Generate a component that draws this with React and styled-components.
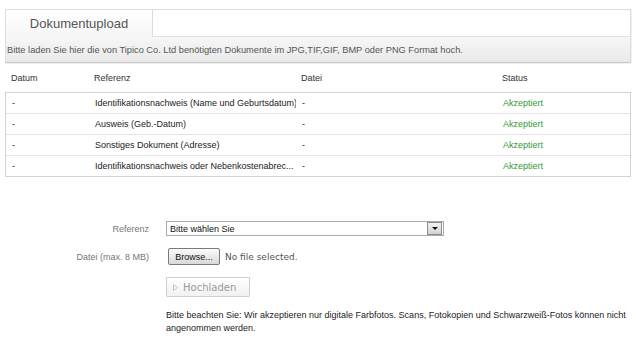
import styled, { createGlobalStyle } from "styled-components";

const GlobalStyle = createGlobalStyle`
  body {
    margin: 0;
    background: #fff;
    font-family: "Liberation Sans", Arial, sans-serif;
  }
`;

const Page = styled.div`
  width: 626px;
  padding: 9px 5px 0 5px;
`;

const Panel = styled.div`
  border: 1px solid #dcdcdc;
  border-bottom-color: #c9c9c9;
  box-shadow: 1px 1px 1px rgba(0, 0, 0, 0.06);
`;

const TabRow = styled.div`
  display: flex;
  height: 27px;
`;

const Tab = styled.div`
  width: 146px;
  border-right: 1px solid #dcdcdc;
  background: linear-gradient(#ffffff, #f6f6f6);
  display: flex;
  align-items: center;
  justify-content: center;
  font-size: 13px;
  color: #555;
`;

const TabFill = styled.div`
  flex: 1;
  border-bottom: 1px solid #e2e2e2;
  background: #fff;
`;

const InfoBar = styled.div`
  height: 25px;
  display: flex;
  align-items: center;
  padding-left: 1px;
  font-size: 9.25px;
  color: #555;
  background: linear-gradient(#f7f7f7, #e9e9e9);
`;

const columns = "83px 207px 201px 1fr";

const HeadRow = styled.div`
  display: grid;
  grid-template-columns: ${columns};
  height: 29px;
  align-items: center;
  font-size: 9px;
  color: #333;
`;

const Body = styled.div`
  border: 1px solid #d4d4d4;
`;

const Row = styled.div`
  display: grid;
  grid-template-columns: ${columns};
  height: 20px;
  align-items: center;
  font-size: 9px;
  color: #222;
  & + & {
    border-top: 1px solid #e3e3e3;
  }
`;

const Cell = styled.div`
  padding-left: 6px;
  white-space: nowrap;
  overflow: hidden;
  color: ${(p) => (p.$ok ? "#349a34" : "inherit")};
`;

const Form = styled.div`
  display: grid;
  grid-template-columns: 144px 1fr;
  column-gap: 17px;
  row-gap: 12px;
  margin-top: 44px;
  align-items: center;
`;

const Label = styled.div`
  text-align: right;
  font-size: 9px;
  color: #777;
`;

const Select = styled.div`
  width: 273px;
  height: 13px;
  border: 1px solid #a9a9a9;
  display: flex;
  align-items: center;
  justify-content: space-between;
  font-size: 9px;
  color: #111;
  padding-left: 3px;
`;

const Arrow = styled.div`
  width: 13px;
  height: 11px;
  margin-right: 1px;
  border: 1px solid #8c8c8c;
  background: linear-gradient(#f2f2f2, #d2d2d2);
  display: flex;
  align-items: center;
  justify-content: center;
  &::after {
    content: "";
    border-left: 3px solid transparent;
    border-right: 3px solid transparent;
    border-top: 3px solid #111;
  }
`;

const FileRow = styled.div`
  display: flex;
  align-items: center;
  gap: 5px;
  padding-left: 2px;
`;

const BrowseButton = styled.button`
  height: 17px;
  width: 52px;
  padding: 0;
  border: 1px solid #7a7a7a;
  border-radius: 2px;
  background: linear-gradient(#fbfbfb, #d9d9d9);
  font-family: "Liberation Sans", Arial, sans-serif;
  font-size: 9px;
  color: #111;
`;

const NoFile = styled.span`
  font-family: "DejaVu Sans", sans-serif;
  font-size: 9px;
  color: #555;
`;

const UploadButton = styled.button`
  width: 84px;
  height: 20px;
  padding: 0 0 0 6px;
  display: flex;
  align-items: center;
  gap: 5px;
  border: 1px solid #cfcfcf;
  border-radius: 1px;
  background: linear-gradient(#ffffff, #f1f1f1);
  font-family: "DejaVu Sans", sans-serif;
  font-size: 10px;
  color: #9a9a9a;
`;

const Note = styled.p`
  grid-column: 2;
  margin: 0;
  font-size: 9px;
  line-height: 13px;
  color: #222;
  padding-right: 4px;
`;

const rows = [
  "Identifikationsnachweis (Name und Geburtsdatum)",
  "Ausweis (Geb.-Datum)",
  "Sonstiges Dokument (Adresse)",
  "Identifikationsnachweis oder Nebenkostenabrec...",
];

export default function App() {
  return (
    <>
      <GlobalStyle />
      <Page>
        <Panel>
          <TabRow>
            <Tab>Dokumentupload</Tab>
            <TabFill />
          </TabRow>
          <InfoBar>
            Bitte laden Sie hier die von Tipico Co. Ltd benötigten Dokumente im
            JPG,TIF,GIF, BMP oder PNG Format hoch.
          </InfoBar>
        </Panel>
        <div>
          <HeadRow>
            <Cell>Datum</Cell>
            <Cell>Referenz</Cell>
            <Cell>Datei</Cell>
            <Cell>Status</Cell>
          </HeadRow>
          <Body>
            {rows.map((r) => (
              <Row key={r}>
                <Cell>-</Cell>
                <Cell>{r}</Cell>
                <Cell>-</Cell>
                <Cell $ok>Akzeptiert</Cell>
              </Row>
            ))}
          </Body>
        </div>
        <Form>
          <Label>Referenz</Label>
          <Select>
            Bitte wählen Sie
            <Arrow />
          </Select>
          <Label>Datei (max. 8 MB)</Label>
          <FileRow>
            <BrowseButton>Browse...</BrowseButton>
            <NoFile>No file selected.</NoFile>
          </FileRow>
          <span />
          <UploadButton>
            <svg width="5" height="7" viewBox="0 0 5 7">
              <polygon
                points="0.5,0.5 4.5,3.5 0.5,6.5"
                fill="none"
                stroke="#c4c4c4"
                strokeWidth="1"
              />
            </svg>
            Hochladen
          </UploadButton>
          <Note>
            Bitte beachten Sie: Wir akzeptieren nur digitale Farbfotos. Scans,
            Fotokopien und Schwarzweiß-Fotos können nicht angenommen werden.
          </Note>
        </Form>
      </Page>
    </>
  );
}
